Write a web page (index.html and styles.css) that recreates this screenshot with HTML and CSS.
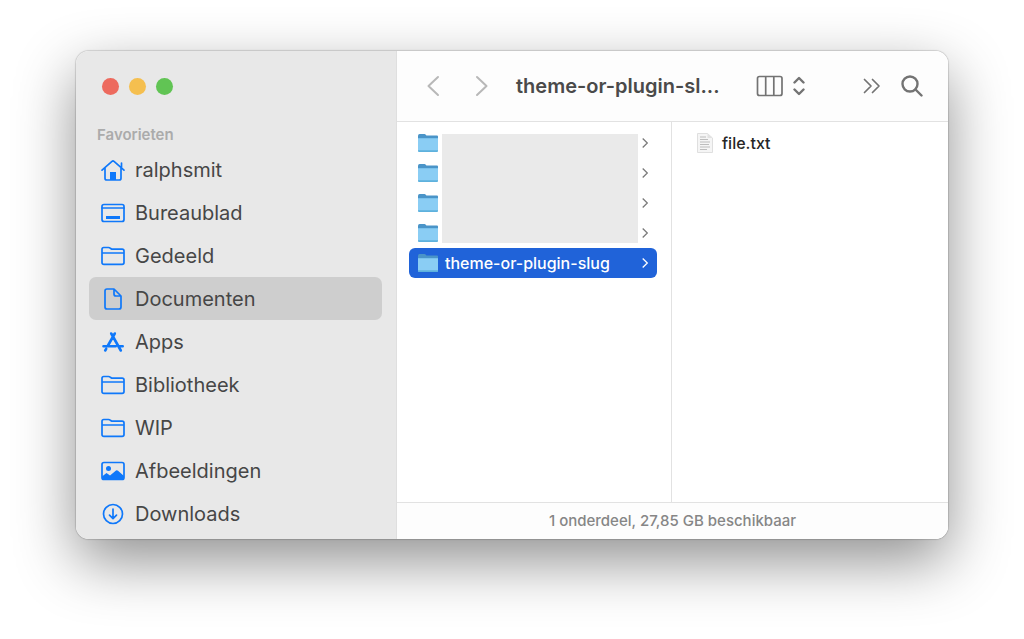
FILE: index.html
```html
<!DOCTYPE html>
<html lang="nl">
  <head>
    <meta charset="utf-8" />
    <title>theme-or-plugin-slug</title>
    <meta name="viewport" content="width=device-width, initial-scale=1" />
    <link rel="stylesheet" href="styles.css">
  </head>
  <body>
    <!-- shared icons -->
    <svg class="sprite" aria-hidden="true">
      <symbol id="icon-folder" viewBox="0 0 26 26">
        <path d="M2 19.500V6.300c0-1.200.7-1.800 1.800-1.800h4.700c.8 0 1.200.2 1.800.7l.8.6c.4.3.7.4 1.300.4h9.700c1.200 0 1.900.7 1.900 1.900v11.400c0 1.200-.7 1.900-1.900 1.900H3.900c-1.200 0-1.900-.7-1.900-1.900zM2 10h22" />
      </symbol>
      <symbol id="icon-finder-folder" viewBox="0 0 22 20">
        <path fill="#4a94c8" d="M1 3Q1 1 2.600 1H7.500Q8.300 1 9 2l.4.600H20q1 0 1 1V9H1z" />
        <path fill="#8acdf4" d="M1 5h20V17.500q0 1.500-1.500 1.500h-17q-1.500 0-1.500-1.500z" />
        <path fill="#5eb1dd" d="M1 17.300h20v.2q0 1.500-1.500 1.500h-17q-1.500 0-1.500-1.500z" />
        <path fill="#79c1ec" d="M1 5h20v1H1z" />
      </symbol>
      <symbol id="icon-chevron" viewBox="0 0 8 12">
        <path d="M1.700 1.500L6.300 6l-4.600 4.500" />
      </symbol>
    </svg>

    <div class="window">
      <aside class="sidebar">
        <div class="window-buttons">
          <button class="close" aria-label="Sluit"></button>
          <button class="minimize" aria-label="Minimaliseer"></button>
          <button class="maximize" aria-label="Vergroot"></button>
        </div>
        <h2>Favorieten</h2>
        <nav>
          <a href="#">
            <svg viewBox="0 0 26 26">
              <path d="M2 13.200L12 4.400q1-.8 2 0L24 13.200M5 11v10.200q0 1.800 1.800 1.800h12.400q1.800 0 1.800-1.800V11M21.500 10V6" />
              <path class="solid" d="M10 15h6v8h-6z" />
            </svg>
            <span>ralphsmit</span>
          </a>
          <a href="#">
            <svg viewBox="0 0 26 26">
              <rect x="2" y="4.500" width="22" height="17" rx="2" />
              <path d="M2 8h22" />
              <path class="solid" d="M6 16h14v3H6z" />
            </svg>
            <span>Bureaublad</span>
          </a>
          <a href="#">
            <svg><use href="#icon-folder" /></svg>
            <span>Gedeeld</span>
          </a>
          <a href="#" class="active">
            <svg viewBox="0 0 26 26">
              <path d="M14 3H7Q5 3 5 5v16q0 2 2 2h12q2 0 2-2V10zM14 3v5q0 2 2 2h5" />
            </svg>
            <span>Documenten</span>
          </a>
          <a href="#">
            <svg viewBox="0 0 26 26">
              <path class="thick" d="M14.800 4.500L7.700 17M11.200 4.500l2 3.500M13.500 8.500l7.300 13M3.500 17.200h12.200M19.500 17.200h3.200M6.200 19.800l-1 1.700" />
            </svg>
            <span>Apps</span>
          </a>
          <a href="#">
            <svg><use href="#icon-folder" /></svg>
            <span>Bibliotheek</span>
          </a>
          <a href="#">
            <svg><use href="#icon-folder" /></svg>
            <span>WIP</span>
          </a>
          <a href="#">
            <svg viewBox="0 0 26 26">
              <rect x="2" y="4.500" width="22" height="17" rx="2" />
              <circle class="solid" cx="8.500" cy="10.500" r="2.500" />
              <path class="solid" d="M2 18.500l4.500-3.500 3.500 2.500 6-5q1-.7 2 .2l6 5.300v2q0 2-2 2H4q-2 0-2-2z" />
            </svg>
            <span>Afbeeldingen</span>
          </a>
          <a href="#">
            <svg viewBox="0 0 26 26">
              <circle cx="13" cy="13" r="9.500" />
              <path d="M13 8v9.500M9.500 14.200l3.500 3.500 3.500-3.500" />
            </svg>
            <span>Downloads</span>
          </a>
        </nav>
      </aside>

      <main>
        <header>
          <div class="history">
            <button aria-label="Vorige">
              <svg viewBox="0 0 14 22"><path d="M12 2L2.500 11l9.500 9" /></svg>
            </button>
            <button aria-label="Volgende">
              <svg viewBox="0 0 14 22"><path d="M2 2l9.500 9L2 20" /></svg>
            </button>
          </div>
          <h1>theme-or-plugin-sl...</h1>
          <button class="view" aria-label="Weergave">
            <svg width="28" height="22" viewBox="0 0 28 22">
              <path d="M3.500 1.500h20.500q2 0 2 2v15q0 2-2 2H3.500q-2 0-2-2v-15q0-2 2-2zM9.700 1.500v19M17.800 1.500v19" />
            </svg>
            <svg class="bold" width="12" height="20" viewBox="0 0 12 20">
              <path d="M1.500 6.500L6 2l4.500 4.500M1.500 13.500L6 18l4.500-4.500" />
            </svg>
          </button>
          <button class="more" aria-label="Meer">
            <svg width="18" height="16" viewBox="0 0 18 16">
              <path d="M1.500 1.500L8 8l-6.500 6.500M9.500 1.500L16 8l-6.500 6.500" />
            </svg>
          </button>
          <button class="search" aria-label="Zoek">
            <svg class="bold" width="22" height="22" viewBox="0 0 22 22">
              <circle cx="9" cy="9" r="7.500" />
              <path d="M14.500 14.500l6 6" />
            </svg>
          </button>
        </header>

        <div class="columns">
          <div class="column folders">
            <ul>
              <li><svg class="file-icon"><use href="#icon-finder-folder" /></svg><svg class="chevron"><use href="#icon-chevron" /></svg></li>
              <li><svg class="file-icon"><use href="#icon-finder-folder" /></svg><svg class="chevron"><use href="#icon-chevron" /></svg></li>
              <li><svg class="file-icon"><use href="#icon-finder-folder" /></svg><svg class="chevron"><use href="#icon-chevron" /></svg></li>
              <li><svg class="file-icon"><use href="#icon-finder-folder" /></svg><svg class="chevron"><use href="#icon-chevron" /></svg></li>
              <li class="selected"><svg class="file-icon"><use href="#icon-finder-folder" /></svg><span>theme-or-plugin-slug</span><svg class="chevron"><use href="#icon-chevron" /></svg></li>
            </ul>
            <div class="cover"></div>
          </div>
          <div class="column files">
            <ul>
              <li>
                <svg class="file-icon" viewBox="0 0 22 20">
                  <path fill="#f5f5f5" stroke="#dfdfdf" d="M3.500.500h10l5 4.500v14.500h-15z" />
                  <path fill="#e2e2e2" d="M13.500.500V5h5z" />
                  <path stroke="#bdbdbd" d="M6 4h6M6 6.500h8M6 9h10M6 11.500h9M6 14h10M6 16.500h7" />
                </svg>
                <span>file.txt</span>
              </li>
            </ul>
          </div>
        </div>

        <footer>1 onderdeel, 27,85 GB beschikbaar</footer>
      </main>
    </div>
  </body>
</html>
```
FILE: styles.css
```css
* {
  padding: 0;
  margin: 0;
  box-sizing: border-box;
}
body {
  background-color: #ffffff;
  font-family: Inter, "Liberation Sans", sans-serif;
  min-height: 100vh;
  padding: 51px 76px 100px;
  display: flex;
}
button {
  border: none;
  background: none;
}
svg {
  display: block;
  flex-shrink: 0;
}
ul {
  list-style: none;
}
.sprite {
  position: absolute;
  width: 0;
  height: 0;
}
.window {
  flex: 1;
  display: flex;
  border-radius: 13px;
  overflow: hidden;
  box-shadow: 0 0 1px 1px rgba(0, 0, 0, 0.14), 0 22px 60px rgba(0, 0, 0, 0.44);
}

/* Sidebar */
.sidebar {
  width: 321px;
  flex-shrink: 0;
  padding: 27px 14px 4px 13px;
  background-color: #e8e8e8;
  border-right: 1px solid #dfdfdf;
}
.window-buttons {
  display: flex;
  gap: 10px;
  padding-left: 13px;
}
.window-buttons button {
  width: 17px;
  height: 17px;
  border-radius: 50%;
}
.close {
  background-color: #ed6a5e;
}
.minimize {
  background-color: #f5bf4f;
}
.maximize {
  background-color: #61c454;
}
.sidebar h2 {
  margin: 30px 0 3px;
  padding-left: 8px;
  font-size: 15px;
  line-height: 20px;
  font-weight: 600;
  color: #ababab;
}
nav a {
  display: flex;
  align-items: center;
  gap: 9px;
  height: 43px;
  padding-left: 11px;
  border-radius: 7px;
  font-size: 20px;
  color: #464646;
  text-decoration: none;
}
nav a.active {
  background-color: #cecece;
}
nav svg {
  width: 26px;
  height: 26px;
  fill: none;
  stroke: #0f78fa;
  stroke-width: 1.7;
  stroke-linecap: round;
  stroke-linejoin: round;
}
nav .solid {
  fill: #0f78fa;
  stroke: none;
}
nav .thick {
  stroke-width: 2.6;
}

/* Right part of the window */
main {
  flex: 1;
  min-width: 0;
  display: flex;
  flex-direction: column;
  background-color: #ffffff;
}
header {
  height: 71px;
  display: flex;
  align-items: center;
  padding: 0 25px 0 29px;
  background-color: #fdfdfd;
  border-bottom: 1px solid #e2e2e2;
}
header svg {
  fill: none;
  stroke: #737373;
  stroke-width: 1.7;
  stroke-linecap: round;
  stroke-linejoin: round;
}
header .bold {
  stroke-width: 2.4;
}
.history {
  display: flex;
  gap: 35px;
}
.history svg {
  width: 14px;
  height: 22px;
  stroke: #b8b8b8;
  stroke-width: 2;
}
h1 {
  margin-left: 27px;
  font-size: 20px;
  font-weight: 600;
  color: #4a4a4a;
  white-space: nowrap;
}
.view {
  display: flex;
  align-items: center;
  gap: 9px;
  margin-left: 36px;
}
.more {
  margin-left: auto;
}
.search {
  margin-left: 20px;
}
.columns {
  flex: 1;
  display: flex;
}
.column {
  padding: 6px 14px 0 12px;
}
.folders {
  position: relative;
  width: 275px;
  border-right: 1px solid #e2e2e2;
}
.files {
  flex: 1;
  padding-left: 14px;
}
.column li {
  display: flex;
  align-items: center;
  gap: 6px;
  height: 30px;
  padding: 0 8px;
  border-radius: 6px;
  font-size: 16px;
  font-weight: 500;
  color: #262626;
}
.column .selected {
  background-color: #2063d9;
  color: #ffffff;
}
.file-icon {
  width: 22px;
  height: 20px;
}
.chevron {
  width: 8px;
  height: 12px;
  margin-left: auto;
  fill: none;
  stroke: #7c7c7c;
  stroke-width: 1.3;
}
.selected .chevron {
  stroke: #ffffff;
}
.cover {
  position: absolute;
  top: 12px;
  left: 45px;
  right: 33px;
  height: 109px;
  background-color: #eaeaea;
}
footer {
  height: 37px;
  border-top: 1px solid #e2e2e2;
  background-color: #fdfdfd;
  font-size: 15px;
  font-weight: 500;
  line-height: 36px;
  text-align: center;
  color: #868686;
}
```
